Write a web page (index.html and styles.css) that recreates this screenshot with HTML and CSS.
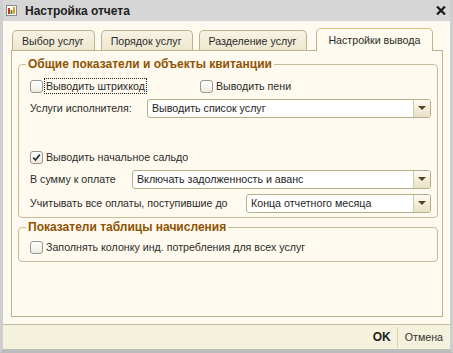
FILE: index.html
```html
<!DOCTYPE html>
<html lang="ru">
<head>
    <meta charset="UTF-8">
    <meta name="viewport" content="width=device-width, initial-scale=1.0">
    <title>Настройка отчета</title>
    <link rel="stylesheet" href="styles.css">
</head>
<body>
    <div class="window">
        <div class="titlebar">
            <svg class="app-icon" width="11" height="11" viewBox="0 0 11 11">
                <rect x="0.5" y="0.5" width="10" height="10" fill="#fff" stroke="#8a8a8a"/>
                <rect x="2" y="3" width="2" height="6" fill="#d8321e"/>
                <rect x="4.5" y="5" width="2" height="4" fill="#3c9a3c"/>
                <rect x="7" y="2" width="2" height="7" fill="#e0a020"/>
            </svg>
            <span class="title">Настройка отчета</span>
            <svg class="close" width="10" height="9" viewBox="0 0 10 9">
                <path d="M1 0.5 L9 8.5 M9 0.5 L1 8.5" stroke="#1a1a1a" stroke-width="2.2"/>
            </svg>
        </div>

        <div class="body">
            <div class="tabs">
                <div class="tab">Выбор услуг</div>
                <div class="tab">Порядок услуг</div>
                <div class="tab">Разделение услуг</div>
                <div class="tab active">Настройки вывода</div>
            </div>

            <div class="panel">
                <fieldset class="group group-main">
                    <legend>Общие показатели и объекты квитанции</legend>

                    <div class="row">
                        <label class="check check-col focused">
                            <span class="box"></span>
                            <span class="text">Выводить штрихкод</span>
                        </label>
                        <label class="check">
                            <span class="box"></span>
                            <span class="text">Выводить пени</span>
                        </label>
                    </div>

                    <div class="row">
                        <span class="field-label label-services">Услуги исполнителя:</span>
                        <div class="select">
                            <span class="value">Выводить список услуг</span>
                            <span class="arrow"><i></i></span>
                        </div>
                    </div>

                    <div class="row after-space">
                        <label class="check">
                            <span class="box checked">
                                <svg width="11" height="11" viewBox="0 0 11 11">
                                    <path d="M2.2 5.6 L4.5 8 L8.8 2.6" fill="none" stroke="#2e2e2e" stroke-width="1.7"/>
                                </svg>
                            </span>
                            <span class="text">Выводить начальное сальдо</span>
                        </label>
                    </div>

                    <div class="row">
                        <span class="field-label label-sum">В сумму к оплате</span>
                        <div class="select">
                            <span class="value">Включать задолженность и аванс</span>
                            <span class="arrow"><i></i></span>
                        </div>
                    </div>

                    <div class="row loose">
                        <span class="field-label label-payments">Учитывать все оплаты, поступившие до</span>
                        <div class="select">
                            <span class="value">Конца отчетного месяца</span>
                            <span class="arrow"><i></i></span>
                        </div>
                    </div>
                </fieldset>

                <fieldset class="group group-accruals">
                    <legend>Показатели таблицы начисления</legend>
                    <div class="row">
                        <label class="check">
                            <span class="box"></span>
                            <span class="text">Заполнять колонку инд. потребления для всех услуг</span>
                        </label>
                    </div>
                </fieldset>
            </div>
        </div>

        <div class="footer">
            <span class="btn btn-ok">OK</span>
            <span class="sep"></span>
            <span class="btn">Отмена</span>
        </div>
    </div>
</body>
</html>
```

FILE: styles.css
```css
body {
    margin: 0;
    font-family: "Liberation Sans", Arial, sans-serif;
    font-size: 8pt;
    color: #2b2b2b;
    background: #ffffff;
}
.window {
    width: 453px;
    height: 353px;
    box-sizing: border-box;
    display: flex;
    flex-direction: column;
    background: #fffaef;
    border-left: 3px solid #cecece;
    border-right: 3px solid #cecece;
    border-bottom: 4px solid #bcbcbc;
}
.titlebar {
    height: 21px;
    flex-shrink: 0;
    display: flex;
    align-items: center;
    padding-left: 3px;
    background: #d6d6d6;
}
.app-icon {
    margin-right: 8px;
}
.title {
    font-size: 12px;
    font-weight: bold;
    color: #1e1e1e;
}
.close {
    margin-left: auto;
    margin-right: 4px;
}
.body {
    flex: 1;
    display: flex;
    flex-direction: column;
    padding: 8px 7px 7px 8px;
}
.tabs {
    display: flex;
    align-items: flex-end;
    height: 21px;
    padding-left: 1px;
    position: relative;
    z-index: 1;
}
.tab {
    height: 20px;
    box-sizing: border-box;
    display: flex;
    align-items: center;
    padding: 0 10px 0 9px;
    margin-right: 6px;
    border: 1px solid #bbb28e;
    border-bottom: none;
    border-radius: 5px 5px 0 0;
    background: linear-gradient(#f8f4e4, #ede7cf);
    color: #2b2b2b;
}
.tab.active {
    height: 23px;
    margin-bottom: -1px;
    margin-left: 3px;
    padding: 0 12px 0 11px;
    background: #fffaef;
    border-top-color: #dcc27e;
}
.panel {
    flex: 1;
    display: flex;
    flex-direction: column;
    border: 1px solid #bbb28e;
    padding: 6px 4px 0 6px;
}
.group {
    margin: 0;
    border: 1px solid #c6bc98;
    border-radius: 4px;
    padding: 5px 6px 4px 11px;
}
.group legend {
    margin-left: -4px;
    padding: 0 2px;
    line-height: 14px;
    font-size: 9pt;
    font-weight: bold;
    color: #8e5303;
}
.group-accruals {
    margin-top: 2px;
    padding-top: 3px;
}
.row {
    display: flex;
    align-items: center;
    height: 20px;
}
.row + .row {
    margin-top: 2px;
}
.row.after-space {
    margin-top: 29px;
}
.row.loose {
    margin-top: 4px;
}
.check {
    display: flex;
    align-items: center;
}
.check-col {
    width: 170px;
}
.box {
    width: 11px;
    height: 11px;
    border: 1px solid #9b9788;
    border-radius: 3px;
    background: linear-gradient(#ffffff, #ecebe2);
    margin-right: 1px;
}
.box svg {
    display: block;
}
.check .text {
    padding: 1px 1px;
    border: 1px dotted transparent;
}
.check.focused .text {
    border-color: #202020;
}
.field-label {
    flex-shrink: 0;
}
.label-services {
    width: 117px;
}
.label-sum {
    width: 102px;
}
.label-payments {
    width: 216px;
}
.select {
    flex: 1;
    height: 19px;
    box-sizing: border-box;
    display: flex;
    align-items: center;
    border: 1px solid #b7ae8a;
    border-radius: 3px;
    background: #ffffff;
    color: #1e1e1e;
}
.select .value {
    flex: 1;
    padding-left: 4px;
    white-space: nowrap;
}
.select .arrow {
    width: 16px;
    align-self: stretch;
    display: flex;
    align-items: center;
    justify-content: center;
    border-left: 1px solid #d3cbab;
    border-radius: 0 2px 2px 0;
    background: linear-gradient(#fdfbf3, #e8e1c6);
}
.select .arrow i {
    width: 0;
    height: 0;
    border-left: 4px solid transparent;
    border-right: 4px solid transparent;
    border-top: 4px solid #564719;
}
.footer {
    height: 25px;
    box-sizing: border-box;
    flex-shrink: 0;
    display: flex;
    align-items: center;
    justify-content: flex-end;
    padding-right: 7px;
    border-top: 1px solid #c2bca2;
    background: #f4f1dd;
}
.btn {
    color: #333333;
}
.btn-ok {
    font-size: 12px;
    font-weight: bold;
    color: #222222;
}
.sep {
    width: 1px;
    height: 21px;
    margin: 0 7px 0 6px;
    background: #d8d2b6;
}
```
